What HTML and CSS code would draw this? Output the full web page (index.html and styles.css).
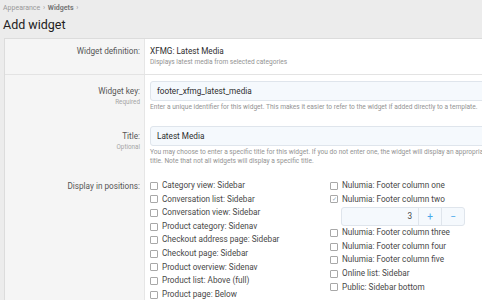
FILE: index.html
```html
<!DOCTYPE html>
<html lang="en">
<head>
    <meta charset="UTF-8">
    <title>Add widget</title>
    <link rel="stylesheet" href="styles.css">
</head>
<body>
    <div class="page-head">
        <div class="breadcrumb">Appearance <span class="sep">&rsaquo;</span> <b>Widgets</b> <span class="sep">&rsaquo;</span></div>
        <h1>Add widget</h1>
    </div>
    <div class="block">
        <div class="form-row separated">
            <div class="label">Widget definition:</div>
            <div class="field">
                <div class="plain">XFMG: Latest Media</div>
                <div class="explain">Displays latest media from selected categories</div>
            </div>
        </div>
        <div class="form-row">
            <div class="label">Widget key:<span class="hint">Required</span></div>
            <div class="field">
                <div class="input">footer_xfmg_latest_media</div>
                <div class="explain">Enter a unique identifier for this widget. This makes it easier to refer to the widget if added directly to a template.</div>
            </div>
        </div>
        <div class="form-row">
            <div class="label">Title:<span class="hint">Optional</span></div>
            <div class="field">
                <div class="input">Latest Media</div>
                <div class="explain">You may choose to enter a specific title for this widget. If you do not enter one, the widget will display an appropriate<br>title. Note that not all widgets will display a specific title.</div>
            </div>
        </div>
        <div class="form-row positions">
            <div class="label">Display in positions:</div>
            <div class="field">
                <div class="check-cols">
                    <ul class="check-list">
                        <li><span class="box"></span>Category view: Sidebar</li>
                        <li><span class="box"></span>Conversation list: Sidebar</li>
                        <li><span class="box"></span>Conversation view: Sidebar</li>
                        <li><span class="box"></span>Product category: Sidenav</li>
                        <li><span class="box"></span>Checkout address page: Sidebar</li>
                        <li><span class="box"></span>Checkout page: Sidebar</li>
                        <li><span class="box"></span>Product overview: Sidenav</li>
                        <li><span class="box"></span>Product list: Above (full)</li>
                        <li><span class="box"></span>Product page: Below</li>
                    </ul>
                    <ul class="check-list">
                        <li><span class="box"></span>Nulumia: Footer column one</li>
                        <li><span class="box checked">&#10003;</span>Nulumia: Footer column two</li>
                        <li class="order">
                            <div class="number">
                                <span class="value">3</span>
                                <span class="step">+</span>
                                <span class="step">&minus;</span>
                            </div>
                        </li>
                        <li><span class="box"></span>Nulumia: Footer column three</li>
                        <li><span class="box"></span>Nulumia: Footer column four</li>
                        <li><span class="box"></span>Nulumia: Footer column five</li>
                        <li><span class="box"></span>Online list: Sidebar</li>
                        <li><span class="box"></span>Public: Sidebar bottom</li>
                    </ul>
                </div>
            </div>
        </div>
    </div>
</body>
</html>
```

FILE: styles.css
```css
html, body {
    overflow: hidden;
}
body {
    margin: 0;
    background-color: #ececec;
    color: #2e2e2e;
    font-family: Roboto, "Open Sans", sans-serif;
    font-size: 8.2px;
    width: 700px;
}
.page-head {
    padding: 3px 3px 0 3px;
}
.breadcrumb {
    font-size: 7px;
    color: #999;
    line-height: 10px;
}
.breadcrumb b {
    color: #777;
}
.breadcrumb .sep {
    margin: 0 1px;
}
h1 {
    margin: 4px 0 5px 0;
    font-size: 12.5px;
    font-weight: normal;
    line-height: 16px;
    color: #222;
}
.block {
    margin-left: 4px;
    border: 1px solid #dcdcdc;
    border-right: none;
    background: linear-gradient(to right, #f5f5f5 139px, #e6e6e6 139px, #e6e6e6 140px, #fff 140px);
}
.form-row {
    display: grid;
    grid-template-columns: 140px 1fr;
}
.form-row.separated {
    border-bottom: 1px solid #e3e3e3;
}
.label {
    text-align: right;
    padding: 9px 5px 0 0;
    color: #555;
    line-height: 14px;
}
.separated .label,
.positions .label {
    padding-top: 5px;
}
.hint {
    display: block;
    font-size: 6.3px;
    color: #a5a5a5;
    line-height: 8px;
}
.field {
    padding: 6px 0 8px 5px;
}
.separated .field {
    padding: 5px 0 7px 5px;
}
.positions .field {
    padding-top: 5px;
}
.plain {
    line-height: 14px;
}
.explain {
    font-size: 6.6px;
    color: #939393;
    line-height: 9px;
    white-space: nowrap;
}
.input {
    height: 18px;
    line-height: 18px;
    padding: 0 6px;
    background: #f5f9fd;
    border: 1px solid #dfe5ec;
    border-radius: 3px;
    color: #2e2e2e;
    margin-bottom: 2px;
}
.check-cols {
    display: flex;
}
.check-list {
    list-style: none;
    margin: 0;
    padding: 0;
    width: 180px;
    line-height: 13.6px;
}
.check-list li {
    display: flex;
    align-items: center;
    white-space: nowrap;
    color: #484848;
}
.box {
    width: 6px;
    height: 6px;
    border: 1px solid #a8a8a8;
    border-radius: 1px;
    margin-right: 4px;
    font-size: 6px;
    line-height: 6px;
    color: #8a9fb6;
    text-align: center;
    background: #fff;
}
.check-list .order {
    padding: 1px 0 0 11px;
}
.number {
    display: flex;
    width: 122px;
    height: 17px;
    border: 1px solid #dfe5ec;
    border-radius: 3px;
    background: #f5f9fd;
    line-height: 17px;
}
.number .value {
    flex: 1;
    text-align: right;
    padding-right: 6px;
}
.number .step {
    width: 22px;
    text-align: center;
    color: #47a7eb;
    border-left: 1px solid #dfe5ec;
    font-size: 10px;
}
```
